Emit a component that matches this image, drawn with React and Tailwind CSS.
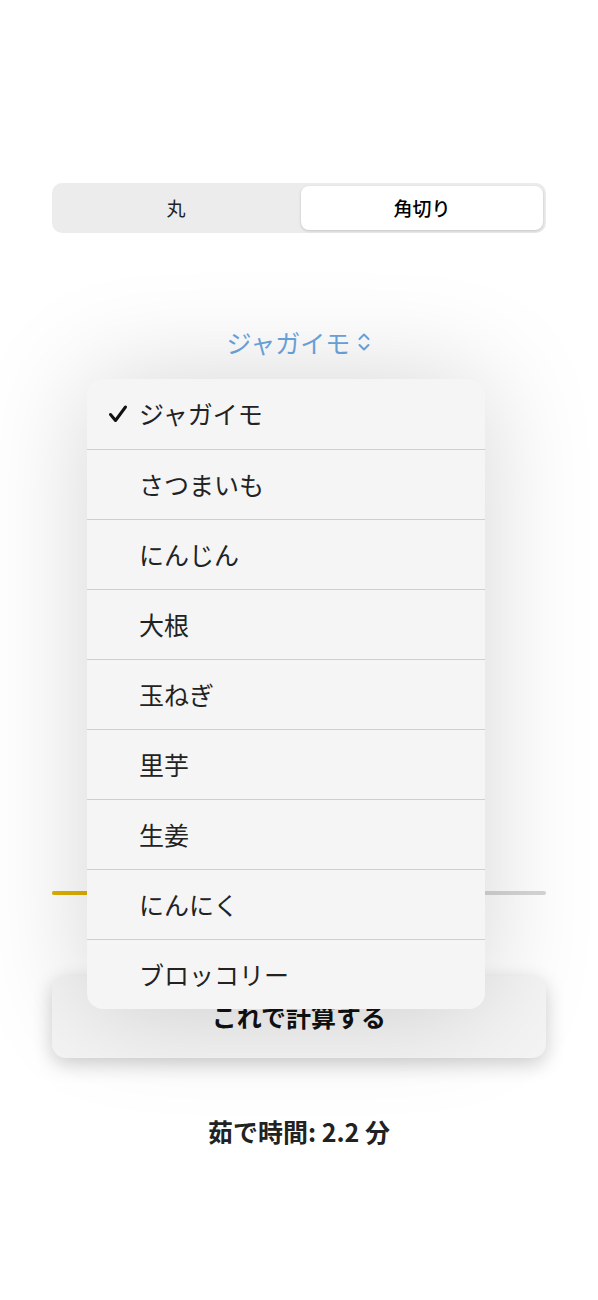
import React, { useState } from "react";

const VEGGIES = [
  "ジャガイモ",
  "さつまいも",
  "にんじん",
  "大根",
  "玉ねぎ",
  "里芋",
  "生姜",
  "にんにく",
  "ブロッコリー",
];

const jp = { fontFamily: '"Noto Sans CJK JP", "Noto Sans", sans-serif' };

function Segmented({ value, onChange }) {
  const options = ["丸", "角切り"];
  return (
    <div className="grid grid-cols-2 gap-[4px] h-[50px] rounded-[10px] bg-[#ececec] p-[3px]">
      {options.map((opt) => {
        const active = opt === value;
        return (
          <button
            key={opt}
            onClick={() => onChange(opt)}
            className={
              active
                ? "rounded-[8px] bg-white shadow-[0_1px_3px_rgba(0,0,0,0.18)] text-[19px] font-medium text-black"
                : "rounded-[8px] text-[19px] text-[#222]"
            }
          >
            {opt}
          </button>
        );
      })}
    </div>
  );
}

function Check() {
  return (
    <svg width="20" height="20" viewBox="0 0 20 20" fill="none">
      <path
        d="M2.5 10.5 L7.5 16.5 L17.5 3"
        stroke="#111"
        strokeWidth="3"
        strokeLinecap="round"
        strokeLinejoin="round"
      />
    </svg>
  );
}

function UpDown() {
  return (
    <svg width="14" height="22" viewBox="0 0 14 22" fill="none">
      <path
        d="M2.5 8 L7 3.5 L11.5 8 M2.5 14 L7 18.5 L11.5 14"
        stroke="#6ba6df"
        strokeWidth="2"
        strokeLinecap="round"
        strokeLinejoin="round"
      />
    </svg>
  );
}

export default function App() {
  const [shape, setShape] = useState("角切り");
  const [veg, setVeg] = useState("ジャガイモ");

  return (
    <div className="min-h-[1300px] w-full bg-white px-[52px] pt-[183px] flex flex-col" style={jp}>
      <Segmented value={shape} onChange={setShape} />

      {/* picker + open menu */}
      <div className="relative mt-[94px] flex justify-center">
        <button className="flex items-center gap-[7px] h-[30px] text-[25px] leading-[30px] text-[#6ba6df]">
          {veg}
          <UpDown />
        </button>

        <div className="absolute z-10 top-[52px] left-[35px] w-[398px] rounded-[16px] bg-[#f5f5f5] overflow-hidden shadow-[0_0_110px_rgba(0,0,0,0.17)]">
          {VEGGIES.map((v, i) => (
            <div
              key={v}
              onClick={() => setVeg(v)}
              className={
                "flex items-center h-[70px] " +
                (i > 0 ? "border-t border-[#cfcfcf]" : "")
              }
            >
              <div className="w-[52px] flex justify-end pr-[11px]">
                {v === veg && <Check />}
              </div>
              <span className="text-[25px] text-[#222]">{v}</span>
            </div>
          ))}
        </div>
      </div>

      {/* slider */}
      <div className="mt-[534px] h-[4px] rounded-full bg-[#d6d6d6] flex">
        <div className="w-[60px] h-full rounded-full bg-[#dfb000]" />
      </div>

      <button className="mt-[81px] h-[82px] rounded-[14px] bg-[#f4f4f4] shadow-[0_6px_20px_rgba(0,0,0,0.2)] text-[25px] font-bold text-[#111]">
        これで計算する
      </button>

      <p className="mt-[58px] text-center text-[25px] leading-[30px] font-bold text-[#222]">
        茹で時間: 2.2 分
      </p>
    </div>
  );
}
